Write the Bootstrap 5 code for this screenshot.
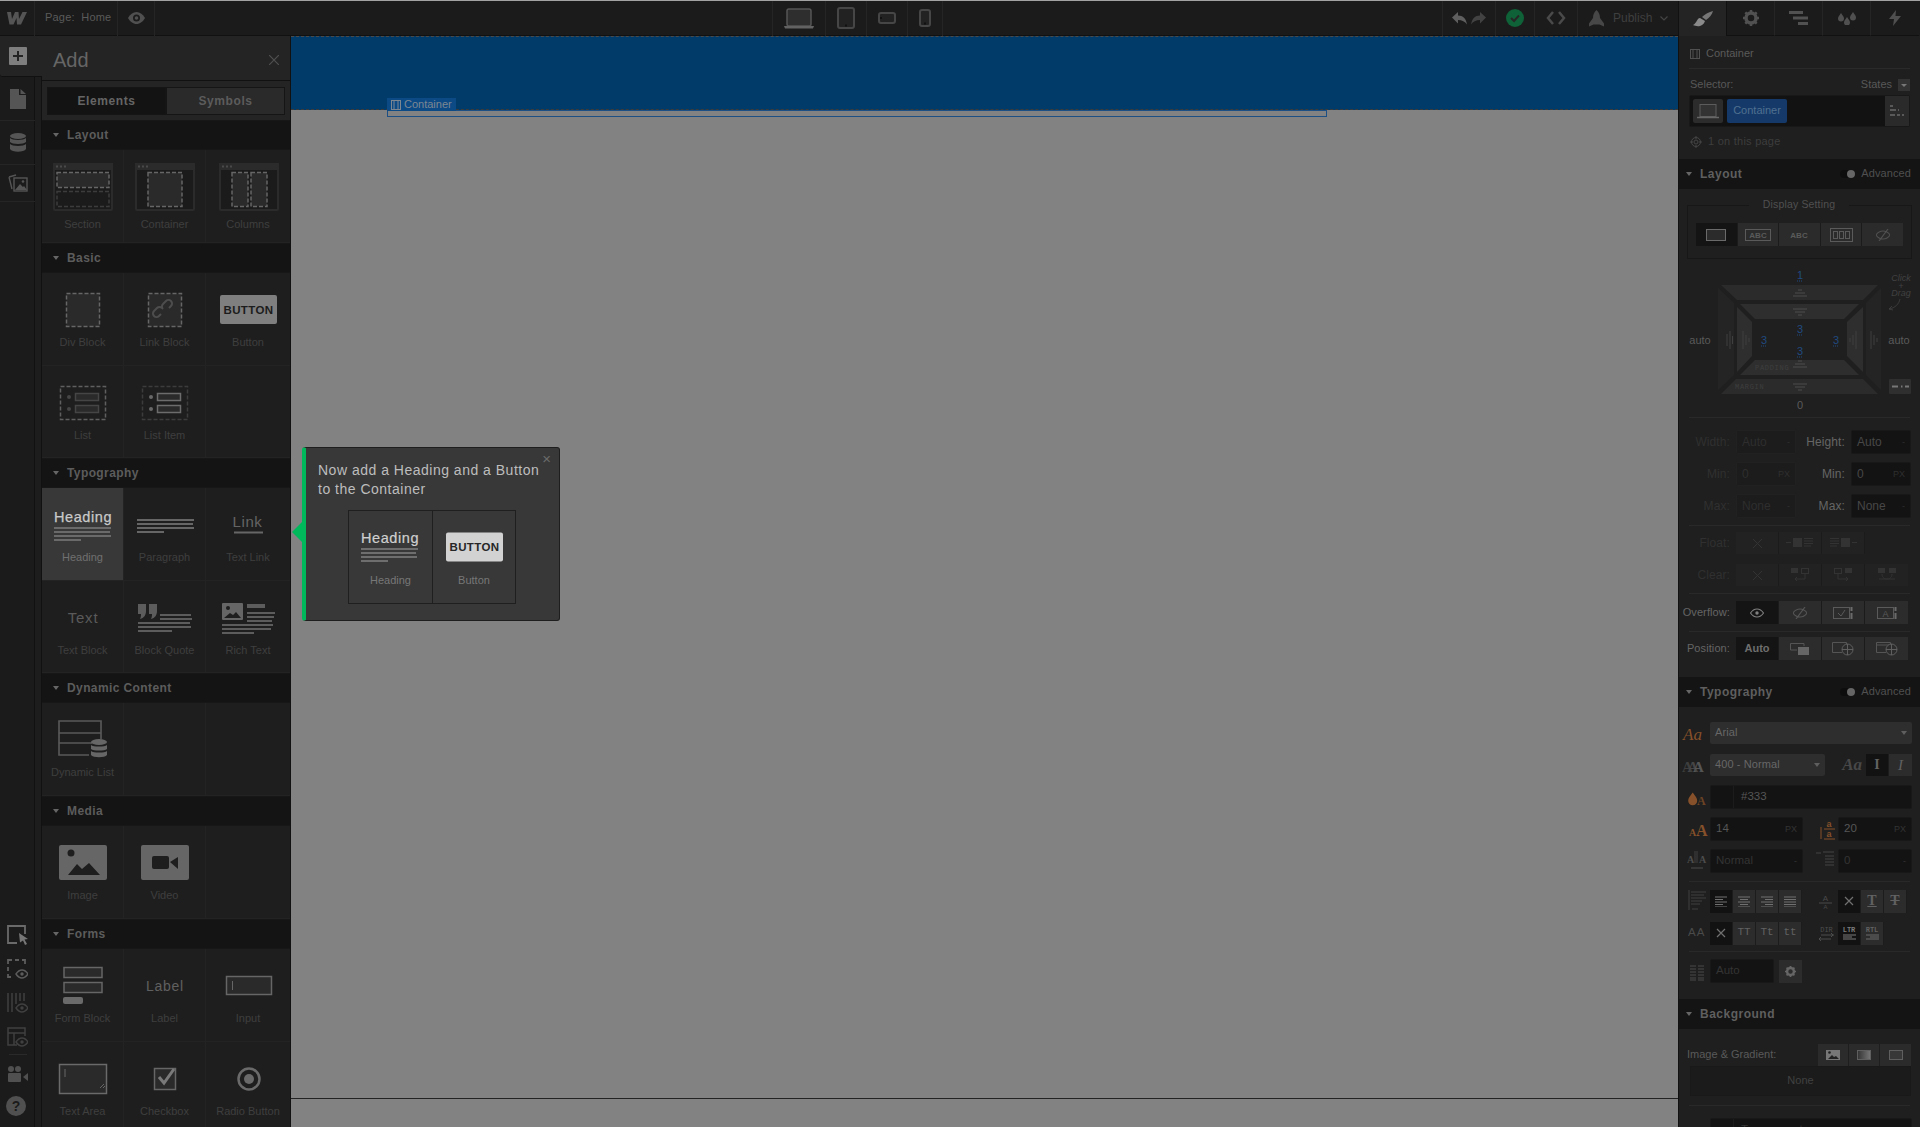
<!doctype html>
<html lang="en"><head><meta charset="utf-8"><title>Designer</title>
<link href="https://cdn.jsdelivr.net/npm/bootstrap@5.3.0/dist/css/bootstrap.min.css" rel="stylesheet">
<style>
html,body{height:100%;overflow:hidden;background:#1b1b1b}
body{font-family:"Liberation Sans",Arial,sans-serif;font-size:11px;color:#555;line-height:1.2}
svg{display:block;flex:none}
svg text{font-family:"Liberation Sans",Arial,sans-serif}
.app{height:1127px;border-top:1px solid #a3a3a3}
.addpanel>*,.rp>*{flex-shrink:0}
.topbar{height:35px;background:#1b1b1b;border-bottom:1px solid #111;flex:none}
.tcell{height:35px;border-right:1px solid #252525;flex:none}
.tc-logo{width:35px}.tc-page{width:83px;padding-left:10px;color:#5a5a5a;font-size:11px;letter-spacing:.2px}.tc-eye{width:37px}
.tsp{flex:0 0 617px}
.tc-first{width:54px;border-left:1px solid #252525}.tc-41{width:41px}.tc-35{width:35px}
.tc-undo{width:54px;border-left:1px solid #252525}.tc-39{width:39px}.tc-43{width:43px}.tc-pub{width:100px;border-right:0;gap:8px;padding-left:10px;font-size:12px;color:#3f3f3f}
.workspace{height:1091px}
.rail{width:35px;background:#1b1b1b;border-right:1px solid #111;flex:none}
.railstrip{width:7px;background:#1d1d1d;border-right:1px solid #111;flex:none}
.railtab{position:absolute;left:0;top:0;width:42px;height:41px;background:#242424;border-bottom:1px solid #111;border-bottom-left-radius:3px;z-index:2}
.railtab svg{margin-left:8px}
.railic{height:44px;width:35px;border-bottom:1px solid #252525}
.railbot{position:absolute;left:0;bottom:0;width:35px}
.rb-gap{margin-bottom:14px}
.addpanel{width:249px;background:#1e1e1e;border-right:1px solid #111;flex:none}
.addhead{height:45px;background:#242424;border-bottom:1px solid #111;padding:4px 11px 0;font-size:20px;color:#666}
.addtabs{height:39px;background:#242424;padding:6px 5px 5px;font-size:12px;font-weight:700;letter-spacing:.6px}
.addtab{flex:1 1 0;border:1px solid #151515}
.addtab-on{background:#131313;color:#656565;flex:0 0 119px}
.addtab-off{background:#2a2a2a;color:#5c5c5c}
.sechead{height:30px;background:#141414;border-top:1px solid #171717;border-bottom:1px solid #171717;padding-left:11px;font-size:12px;font-weight:700;color:#5c5c5c;letter-spacing:.4px;gap:8px}
.caret{width:0;height:0;border-left:3.5px solid transparent;border-right:3.5px solid transparent;border-top:4px solid #666;flex:none}
.tilerow{height:93px;border-bottom:1px solid #232323}
.tilerow+.tilerow{height:92px}
.tile{width:82px;height:92px;border-right:1px solid #232323;flex:none;color:#3f3f3f;text-align:center;line-height:16px;font-size:11px}
.tilerow+.tilerow .tile{height:91px}
.tile:last-child{width:84px;border-right:0}
.tile-on{background:#383838;color:#707070}
.canvasarea{background:#828282;min-width:0}
.sectionbox{height:74px;background:#003b6a;border-top:1px dashed #4a4a4a;border-bottom:1px dashed #3a3a3a}
.contbox{height:7px;margin:0 0 0 96px;width:940px;border:1px solid #1c4f83;background:#828282;position:relative}
.contlabel{position:absolute;left:-1px;top:-13px;width:69px;height:13px;background:#0c4a86;color:#7d8791;font-size:11px;padding-left:4px;gap:3px}
.pagefoot{position:absolute;left:0;right:0;top:1062px;height:40px;border-top:1px solid #222}
.tip{position:absolute;left:11px;top:411px;width:258px;height:174px;background:#383838;border:1px solid #1e1e1e;border-left:4px solid #00b85c;border-radius:3px;color:#bdbdbd;font-size:14px;line-height:19px;letter-spacing:.5px;padding:13px 10px 0 12px}
.tiparrow{position:absolute;left:-14px;top:74px;width:0;height:0;border:10px solid transparent;border-left:0;border-right-color:#00b85c}
.tipx{position:absolute;right:8px;top:3px;font-size:15px;color:#6a6a6a;line-height:16px;letter-spacing:0}
.tipgrid{width:168px;height:94px;margin:11px 0 0 30px;border:1px solid #1f1f1f}
.tiptile{width:83px;height:92px;font-size:11px;line-height:16px;letter-spacing:0;color:#777;text-align:center}
.tiptile+.tiptile{border-left:1px solid #1f1f1f}
.rp{width:242px;background:#1f1f1f;border-left:1px solid #111;flex:none;overflow:hidden;position:relative}
.rtabs{height:35px;background:#1b1b1b}
.rtab{width:48px;height:35px;border-right:1px solid #252525;border-bottom:1px solid #111;flex:none}
.rtab-on{background:#242424;border-bottom:0;border-right:1px solid #111}
.rtitle{height:33px;margin:0 10px;border-bottom:1px solid #2a2a2a;color:#5a5a5a;gap:6px;padding:4px 0 0 1px;font-size:11px}
.sellabel{height:26px;padding:6px 10px 0 11px;color:#585858}
.statesdd{width:12px;height:12px;background:#333;margin-left:6px}
.statesdd i{display:block;width:0;height:0;border:3px solid transparent;border-top:3px solid #777;margin:5px 0 0 3px}
.selbox{height:32px;margin:0 10px;background:#121212;border:1px solid #181818;border-radius:2px;padding-left:3px;gap:4px}
.selic{width:30px;height:24px;background:#2c2c2c;border-radius:2px}
.selpill{width:60px;height:24px;background:#153a6a;color:#50708f;border-radius:2px;font-size:11px}
.selend{width:24px;height:30px;background:#2a2a2a;margin-left:auto}
.onpage{height:32px;padding:0 0 3px 11px;gap:6px;color:#3d3d3d;letter-spacing:.25px}
.rhead{height:30px;background:#141414;padding:0 9px 0 7px;font-size:12px;font-weight:700;color:#5f5f5f;letter-spacing:.5px;gap:6px}
.adv{margin-left:auto;font-size:11px;font-weight:400;color:#505050;letter-spacing:.1px;gap:6px}
.togg{width:15px;height:8px;border-radius:4px;background:#0d0d0d;position:relative}
.togg i{position:absolute;right:0;top:0;width:8px;height:8px;border-radius:50%;background:#666}
.dsbox{position:relative;height:54px;margin:16px 8px 0 8px;border:1px solid #171717;padding:17px 8px 0 8px}
.dslabel{position:absolute;left:61px;top:-8px;width:100px;text-align:center;background:#1f1f1f;color:#505050;font-size:10.5px;letter-spacing:.15px}
.dsbtn{height:23px;flex:1 1 0;background:#2b2b2b;border-right:1px solid #1b1b1b}
.dsbtn-on{background:#141414}
.rsep{height:1px;background:#292929;margin:0 10px}
.frow{height:24px}
.frow-s{height:22px}.frow-m{height:23px}
.flabel{text-align:right;font-size:12px;color:#303030;flex:none;letter-spacing:.1px}
.fl-a{width:51px}.fl-b{width:49px}
.flabel.lit{color:#656565}
.finput{height:24px;background:#1c1c1c;border:1px solid #212121;border-radius:2px;padding:0 5px;color:#2e2e2e;font-size:12px;flex:none}
.finput.lit{background:#131313;border-color:#181818;color:#474747}
.finput small{margin-left:auto;font-size:9px;color:#2f2f2f}
.fi-60{width:60px;margin-left:6px}
.segs{height:100%;flex:none;margin-left:6px}
.seg{width:43px;height:100%;background:#222;border-right:1px solid #1b1b1b;color:#333}
.seg.lit{background:#2c2c2c}
.seg.sel{background:#141414;color:#6e6e6e;font-weight:700;font-size:11px}
.typrow{height:24px;position:relative;padding-left:31px}
.typrow-s{height:22px}
.typrow-s .tb{height:22px}
.typic{position:absolute;left:3px;top:0;width:27px;height:24px}
.tsel{height:22px;background:#2e2e2e;border-radius:2px;padding:0 5px;color:#676767;font-size:11px;flex:none;letter-spacing:.1px}
.ddcaret{margin-left:auto;width:0;height:0;border-left:3.5px solid transparent;border-right:3.5px solid transparent;border-top:4px solid #5f5f5f}
.tin{height:24px;background:#131313;border:1px solid #181818;border-radius:2px;padding:0 5px;color:#565656;font-size:11.5px;flex:none}
.tin.dim{color:#343434}
.tin small{margin-left:auto;font-size:9px;color:#333}
.w92{width:93px}.w74{width:74px}
.tseg{height:23px;flex:none}
.tb{height:23px;width:23px;background:#2c2c2c;border-right:1px solid #1c1c1c;color:#616161;font-size:11px;font-family:"Liberation Mono",monospace}
.tb.sel{background:#121212}
.bgtabs{height:22px;margin-left:auto;margin-right:9px}
.bgtab{width:31px;height:22px;background:#2b2b2b;border-right:1px solid #1e1e1e}
.nonebox{height:30px;margin:0 9px 0 11px;background:#1b1b1b;border:1px solid #191919;color:#414141;font-size:11px}
</style></head><body>
<div class="app d-flex overflow-hidden">
<div class="flex-grow-1 d-flex flex-column" style="min-width:0">
 <div class="topbar d-flex align-items-center">
  <div class="tcell tc-logo d-flex align-items-center justify-content-center">
   <svg width="20" height="14" viewBox="0 0 20 14"><path d="M0 1h4l1 7 3-7h3.500l.5 7 3.500-7H20l-6 12.500h-4L9.500 7l-3 6.500h-4z" fill="#545454"/></svg></div>
  <div class="tcell tc-page d-flex align-items-center">Page:&nbsp;&nbsp;Home</div>
  <div class="tcell tc-eye d-flex align-items-center justify-content-center">
   <svg width="17" height="12" viewBox="0 0 17 12"><path d="M0 6c2-3.500 5-6 8.500-6S15 2.500 17 6c-2 3.500-5 6-8.500 6S2 9.500 0 6z" fill="#505050"/><circle cx="8.500" cy="6" r="3.500" fill="#1b1b1b"/><circle cx="8.500" cy="6" r="1.800" fill="#505050"/></svg></div>
  <div class="tsp"></div>
  <div class="tcell tc-first d-flex align-items-center justify-content-center">
   <svg width="32" height="22" viewBox="0 0 32 22"><rect x="4" y="2" width="24" height="17" rx="2" fill="#2e2e2e" stroke="#555" stroke-width="1.500"/><path d="M1 19h30l-1 2.500H2z" fill="#626262"/></svg></div>
  <div class="tcell tc-41 d-flex align-items-center justify-content-center">
   <svg width="18" height="22" viewBox="0 0 18 22"><rect x="1" y="1" width="16" height="20" rx="2" fill="#222" stroke="#464646" stroke-width="2"/><rect x="8" y="17.500" width="2" height="2" fill="#111"/></svg></div>
  <div class="tcell tc-41 d-flex align-items-center justify-content-center">
   <svg width="18" height="12" viewBox="0 0 18 12"><rect x="1" y="1" width="16" height="10" rx="2" fill="#222" stroke="#464646" stroke-width="2"/><rect x="2" y="5" width="2" height="2" fill="#111"/></svg></div>
  <div class="tcell tc-35 d-flex align-items-center justify-content-center">
   <svg width="12" height="18" viewBox="0 0 12 18"><rect x="1" y="1" width="10" height="16" rx="2" fill="#222" stroke="#464646" stroke-width="2"/><rect x="5" y="13.500" width="2" height="2" fill="#111"/></svg></div>
  <div class="flex-grow-1"></div>
  <div class="tcell tc-undo d-flex align-items-center justify-content-center gap-1">
   <svg width="15" height="13" viewBox="0 0 15 13"><path d="M0 5.500 6 0v3.500c5 0 8 3 9 9-2-3-5-4.500-9-4.500v3.500z" fill="#5f5f5f"/></svg>
   <svg width="15" height="13" viewBox="0 0 15 13"><path d="M15 5.500 9 0v3.500c-5 0-8 3-9 9 2-3 5-4.500 9-4.500v3.500z" fill="#424242"/></svg></div>
  <div class="tcell tc-39 d-flex align-items-center justify-content-center">
   <svg width="18" height="18" viewBox="0 0 18 18"><circle cx="9" cy="9" r="9" fill="#0f6238"/><path d="M5 9l3 3 5-5.500" fill="none" stroke="#262626" stroke-width="2"/></svg></div>
  <div class="tcell tc-43 d-flex align-items-center justify-content-center">
   <svg width="20" height="14" viewBox="0 0 20 14"><path d="M7 1 2 7l5 6M13 1l5 6-5 6" fill="none" stroke="#4a4a4a" stroke-width="2.500"/></svg></div>
  <div class="tcell tc-pub d-flex align-items-center">
   <svg width="17" height="17" viewBox="0 0 17 17"><path d="M8.500 0c2.500 2 3.500 5 3.500 8l4 5.500v3l-4.500-2h-6L1 16.500v-3L5 8c0-3 1-6 3.500-8z" fill="#474747"/></svg>
   <span>Publish</span>
   <svg width="8" height="5" viewBox="0 0 8 5"><path d="M.5.500 4 4 7.500.500" fill="none" stroke="#444" stroke-width="1.200"/></svg></div>
 </div>
 <div class="workspace d-flex flex-grow-1">
  <div class="rail position-relative">
   <div class="railtab d-flex align-items-center"><svg width="20" height="20" viewBox="0 0 20 20"><rect x="1" width="18" height="18" y="1" rx="1" fill="#7e7e7e"/><path d="M10 5v10M5 10h10" stroke="#242424" stroke-width="2"/></svg></div>
   <div style="height:41px"></div>
   <div class="railic d-flex align-items-center justify-content-center"><svg width="16" height="20" viewBox="0 0 16 20"><path d="M0 0h9v6h7v14H0zM10.500 0 16 5h-5.500z" fill="#555"/></svg></div>
   <div class="railic d-flex align-items-center justify-content-center"><svg width="16" height="20" viewBox="0 0 16 20"><ellipse cx="8" cy="3" rx="8" ry="3" fill="#555"/><path d="M0 5c2 2.500 14 2.500 16 0v4c-2 2.500-14 2.500-16 0zM0 11c2 2.500 14 2.500 16 0v5c-2 3.500-14 3.500-16 0z" fill="#555"/></svg></div>
   <div class="railic d-flex align-items-center justify-content-center" style="height:37px"><svg width="20" height="18" viewBox="0 0 20 18"><path d="M1 3l7-2M1 3l3 12" stroke="#555" stroke-width="1.400" fill="none"/><rect x="6" y="4" width="13" height="13" fill="#1b1b1b" stroke="#555" stroke-width="1.400"/><path d="M7 16l5-6 3 3 1-1 3 4z" fill="#555"/><circle cx="15" cy="7.500" r="1.300" fill="#555"/></svg></div>
   <div class="railbot d-flex flex-column align-items-center">
    <svg class="rb-gap" width="21" height="20" viewBox="0 0 21 20"><path d="M18 9V1H1v17h9" fill="none" stroke="#6a6a6a" stroke-width="1.800"/><path d="M12 8l9 6-3.500.5L20 19l-2 1-2-4.500-3 2z" fill="#777"/></svg>
    <svg class="rb-gap" width="21" height="20" viewBox="0 0 21 20"><path d="M1 5V1h4M8 1h4M15 1h3v4M1 8v4M1 15v3h3" fill="none" stroke="#5c5c5c" stroke-width="1.800"/><path d="M9 15c2-3 4-4 6-4s4 1 6 4c-2 3-4 4-6 4s-4-1-6-4z" fill="none" stroke="#5c5c5c" stroke-width="1.400"/><circle cx="15" cy="15" r="1.700" fill="#5c5c5c"/></svg>
    <svg class="rb-gap" width="21" height="20" viewBox="0 0 21 20"><path d="M1 0v19M5 0v19M9 0v11M13 0v8M17 0v8" stroke="#404040" stroke-width="1.500"/><path d="M9 15c2-3 4-4 6-4s4 1 6 4c-2 3-4 4-6 4s-4-1-6-4z" fill="#1b1b1b" stroke="#404040" stroke-width="1.400"/><circle cx="15" cy="15" r="1.700" fill="#404040"/></svg>
    <svg width="21" height="20" viewBox="0 0 21 20"><path d="M10 18H1V1h17v8M1 6h17M7 6v12" fill="none" stroke="#404040" stroke-width="1.500"/><path d="M9 15c2-3 4-4 6-4s4 1 6 4c-2 3-4 4-6 4s-4-1-6-4z" fill="#1b1b1b" stroke="#404040" stroke-width="1.400"/><circle cx="15" cy="15" r="1.700" fill="#404040"/></svg>
    <div style="height:1px;width:18px;background:#2a2a2a;margin:7px 0 11px"></div>
    <svg class="rb-gap" width="21" height="16" viewBox="0 0 21 16"><circle cx="4" cy="3" r="3" fill="#505050"/><circle cx="11" cy="3" r="3" fill="#505050"/><rect x="1" y="7" width="13" height="9" rx="1" fill="#505050"/><path d="M16 11l5-4v8z" fill="#505050"/></svg>
    <svg width="20" height="20" viewBox="0 0 20 20" style="margin:0 3px 11px 0"><circle cx="10" cy="10" r="10" fill="#505050"/><text x="10" y="15" text-anchor="middle" font-size="14" font-weight="700" fill="#1b1b1b">?</text></svg>
   </div>
  </div>
  <div class="railstrip"></div>
  <div class="addpanel d-flex flex-column overflow-hidden">
   <div class="addhead d-flex align-items-center justify-content-between"><span>Add</span><svg width="10" height="10" viewBox="0 0 10 10"><path d="M0 0l10 10M10 0 0 10" stroke="#505050" stroke-width="1.200"/></svg></div>
   <div class="addtabs d-flex"><div class="addtab addtab-on d-flex align-items-center justify-content-center">Elements</div><div class="addtab addtab-off d-flex align-items-center justify-content-center">Symbols</div></div>

   <div class="sechead d-flex align-items-center"><i class="caret"></i>Layout</div>
   <div class="tilerow d-flex">
    <div class="tile"><svg width="82" height="66" viewBox="0 0 82 66"><rect x="12" y="14" width="58" height="46" rx="1" fill="#1b1b1b" stroke="#2b2b2b" stroke-width="2"/><rect x="11" y="13" width="60" height="7" fill="#2b2b2b"/><path d="M14 16.500h10" stroke="#4a4a4a" stroke-width="2" stroke-dasharray="2 2"/><rect x="15" y="22.500" width="52" height="15" fill="#2a2a2a" stroke="#666" stroke-width="1.500" stroke-dasharray="4 2"/><rect x="15" y="41.500" width="52" height="15" fill="none" stroke="#3c3c3c" stroke-width="1.500" stroke-dasharray="4 2"/></svg>Section</div>
    <div class="tile"><svg width="82" height="66" viewBox="0 0 82 66"><rect x="12" y="14" width="58" height="46" rx="1" fill="#1b1b1b" stroke="#2b2b2b" stroke-width="2"/><rect x="11" y="13" width="60" height="7" fill="#2b2b2b"/><path d="M14 16.500h10" stroke="#4a4a4a" stroke-width="2" stroke-dasharray="2 2"/><rect x="24" y="22.500" width="34" height="34" fill="#2a2a2a" stroke="#666" stroke-width="1.500" stroke-dasharray="4 2"/></svg>Container</div>
    <div class="tile"><svg width="84" height="66" viewBox="0 0 84 66"><rect x="14" y="14" width="58" height="46" rx="1" fill="#1b1b1b" stroke="#2b2b2b" stroke-width="2"/><rect x="13" y="13" width="60" height="7" fill="#2b2b2b"/><path d="M16 16.500h10" stroke="#4a4a4a" stroke-width="2" stroke-dasharray="2 2"/><rect x="26" y="22.500" width="16" height="34" fill="#2a2a2a" stroke="#666" stroke-width="1.500" stroke-dasharray="4 2"/><rect x="45" y="22.500" width="16" height="34" fill="#2a2a2a" stroke="#666" stroke-width="1.500" stroke-dasharray="4 2"/></svg>Columns</div>
   </div>

   <div class="sechead d-flex align-items-center"><i class="caret"></i>Basic</div>
   <div class="tilerow d-flex">
    <div class="tile"><svg width="82" height="61" viewBox="0 0 82 61"><rect x="24.500" y="20.500" width="33" height="33" fill="#2a2a2a" stroke="#666" stroke-width="1.500" stroke-dasharray="4 2"/></svg>Div Block</div>
    <div class="tile"><svg width="82" height="61" viewBox="0 0 82 61"><rect x="24.500" y="20.500" width="33" height="33" fill="#2a2a2a" stroke="#666" stroke-width="1.500" stroke-dasharray="4 2"/><path d="M37 40l-2 2a3.500 3.500 0 0 1-5-5l3-3a3.500 3.500 0 0 1 5 0M45 34l2-2a3.500 3.500 0 0 0-5-5l-3 3a3.500 3.500 0 0 0 0 5" transform="translate(0 1)" fill="none" stroke="#4d4d4d" stroke-width="2"/></svg>Link Block</div>
    <div class="tile"><svg width="84" height="61" viewBox="0 0 84 61"><rect x="14" y="22" width="57" height="29" rx="2" fill="#7f7f7f"/><text x="42.500" y="41" text-anchor="middle" font-size="11.500" font-weight="700" letter-spacing=".4" fill="#1c1c1c">BUTTON</text></svg>Button</div>
   </div>
   <div class="tilerow d-flex">
    <div class="tile"><svg width="82" height="61" viewBox="0 0 82 61"><rect x="18.500" y="20.500" width="45" height="33" fill="none" stroke="#5f5f5f" stroke-width="1.500" stroke-dasharray="4 2"/><circle cx="27" cy="31" r="2" fill="#454545"/><circle cx="27" cy="43" r="2" fill="#454545"/><rect x="33.500" y="27.500" width="23" height="7" fill="#2a2a2a" stroke="#454545" stroke-width="1.500"/><rect x="33.500" y="39.500" width="23" height="7" fill="#2a2a2a" stroke="#454545" stroke-width="1.500"/></svg>List</div>
    <div class="tile"><svg width="82" height="61" viewBox="0 0 82 61"><rect x="18.500" y="20.500" width="45" height="33" fill="none" stroke="#3c3c3c" stroke-width="1.500" stroke-dasharray="4 2"/><circle cx="27" cy="31" r="2" fill="#686868"/><circle cx="27" cy="43" r="2" fill="#686868"/><rect x="33.500" y="27.500" width="23" height="7" fill="#2a2a2a" stroke="#6c6c6c" stroke-width="1.500"/><rect x="33.500" y="39.500" width="23" height="7" fill="#2a2a2a" stroke="#6c6c6c" stroke-width="1.500"/></svg>List Item</div>
    <div class="tile"></div>
   </div>

   <div class="sechead d-flex align-items-center"><i class="caret"></i>Typography</div>
   <div class="tilerow d-flex">
    <div class="tile tile-on"><svg width="81" height="61" viewBox="0 0 81 61"><text x="41" y="34" text-anchor="middle" font-size="14.500" letter-spacing=".6" fill="#c9c9c9" stroke="#c9c9c9" stroke-width=".25">Heading</text><path d="M12 40h57M12 44h56M12 48h57M12 52h27" stroke="#6a6a6a" stroke-width="2"/></svg>Heading</div>
    <div class="tile"><svg width="82" height="61" viewBox="0 0 82 61"><path d="M13 32h57M13 36h56M13 40h57M13 44h27" stroke="#666" stroke-width="2"/></svg>Paragraph</div>
    <div class="tile"><svg width="84" height="61" viewBox="0 0 84 61"><text x="41.500" y="39" text-anchor="middle" font-size="15" letter-spacing=".6" fill="#646464">Link</text><path d="M28 44.500h29" stroke="#666" stroke-width="2"/></svg>Text Link</div>
   </div>
   <div class="tilerow d-flex">
    <div class="tile"><svg width="82" height="61" viewBox="0 0 82 61"><text x="41" y="42" text-anchor="middle" font-size="15" letter-spacing=".8" fill="#5a5a5a">Text</text></svg>Text Block</div>
    <div class="tile"><svg width="82" height="61" viewBox="0 0 82 61"><path d="M14 23h8v7c0 4-2 7-6 8 1-2 1-4 1-5h-3zM25 23h8v7c0 4-2 7-6 8 1-2 1-4 1-5h-3z" fill="#5c5c5c"/><path d="M36 34h31M36 38h32M14 42h52M14 46h53M14 50h34" stroke="#5c5c5c" stroke-width="2"/></svg>Block Quote</div>
    <div class="tile"><svg width="84" height="61" viewBox="0 0 84 61"><rect x="16" y="22" width="21" height="17" rx="1" fill="#666"/><circle cx="22" cy="27" r="2" fill="#1e1e1e"/><path d="M18 37l6-5 3 2 3-3 5 6z" fill="#1e1e1e"/><path d="M41 25h18" stroke="#5c5c5c" stroke-width="4"/><path d="M41 32h28M41 36h27M41 40h25M16 44h51M16 48h49M16 52h32" stroke="#5c5c5c" stroke-width="2"/></svg>Rich Text</div>
   </div>

   <div class="sechead d-flex align-items-center"><i class="caret"></i>Dynamic Content</div>
   <div class="tilerow d-flex">
    <div class="tile"><svg width="82" height="61" viewBox="0 0 82 61"><path d="M47 52H17V18h42v18M17 30h42M17 40h33" fill="none" stroke="#5a5a5a" stroke-width="1.600"/><ellipse cx="57" cy="39" rx="8" ry="3" fill="#666"/><path d="M49 42c2 2 14 2 16 0v4c-2 2-14 2-16 0zM49 48c2 2 14 2 16 0v4c-2 3-14 3-16 0z" fill="#666"/></svg>Dynamic List</div>
    <div class="tile"></div><div class="tile"></div>
   </div>

   <div class="sechead d-flex align-items-center"><i class="caret"></i>Media</div>
   <div class="tilerow d-flex">
    <div class="tile"><svg width="82" height="61" viewBox="0 0 82 61"><rect x="17" y="19" width="48" height="35" rx="2" fill="#666"/><circle cx="29" cy="27" r="3.500" fill="#1e1e1e"/><path d="M26 49l9-11 5 5 7-6 11 12z" fill="#1e1e1e"/></svg>Image</div>
    <div class="tile"><svg width="82" height="61" viewBox="0 0 82 61"><rect x="17" y="19" width="48" height="35" rx="2" fill="#666"/><rect x="28" y="30" width="17" height="13" rx="2" fill="#1e1e1e"/><path d="M46 36l8-5v12z" fill="#1e1e1e"/></svg>Video</div>
    <div class="tile"></div>
   </div>

   <div class="sechead d-flex align-items-center"><i class="caret"></i>Forms</div>
   <div class="tilerow d-flex">
    <div class="tile"><svg width="82" height="61" viewBox="0 0 82 61"><rect x="22" y="18.500" width="38" height="10" fill="#2a2a2a" stroke="#666" stroke-width="1.500"/><rect x="22" y="33.500" width="38" height="10" fill="#2a2a2a" stroke="#666" stroke-width="1.500"/><rect x="21" y="48" width="20" height="7" rx="2" fill="#6a6a6a"/></svg>Form Block</div>
    <div class="tile"><svg width="82" height="61" viewBox="0 0 82 61"><text x="41" y="42" text-anchor="middle" font-size="14" letter-spacing=".7" fill="#606060">Label</text></svg>Label</div>
    <div class="tile"><svg width="84" height="61" viewBox="0 0 84 61"><rect x="20.500" y="27.500" width="45" height="18" fill="#2a2a2a" stroke="#666" stroke-width="1.500"/><path d="M26.500 32v9" stroke="#666" stroke-width="1"/></svg>Input</div>
   </div>
   <div class="tilerow d-flex">
    <div class="tile"><svg width="82" height="61" viewBox="0 0 82 61"><rect x="17.500" y="22.500" width="47" height="29" fill="#2a2a2a" stroke="#6a6a6a" stroke-width="1.500"/><path d="M23 27v8M58 46l4-4M61 46l2-2" stroke="#666" stroke-width="1"/></svg>Text Area</div>
    <div class="tile"><svg width="82" height="61" viewBox="0 0 82 61"><rect x="30.500" y="26.500" width="21" height="21" fill="#2a2a2a" stroke="#666" stroke-width="1.500"/><path d="M35 35l5 6 10-14" fill="none" stroke="#7a7a7a" stroke-width="3"/></svg>Checkbox</div>
    <div class="tile"><svg width="84" height="61" viewBox="0 0 84 61"><circle cx="43" cy="37" r="10.500" fill="none" stroke="#6a6a6a" stroke-width="2.500"/><circle cx="43" cy="37" r="5" fill="#6a6a6a"/></svg>Radio Button</div>
   </div>
  </div>

  <div class="canvasarea flex-grow-1 position-relative overflow-hidden">
   <div class="sectionbox"></div>
   <div class="contbox"><div class="contlabel d-flex align-items-center"><svg width="10" height="10" viewBox="0 0 10 10"><rect x=".5" y=".5" width="9" height="9" fill="none" stroke="#7d8791"/><path d="M3 0v10M7 0v10" stroke="#7d8791"/></svg>Container</div></div>
   <div class="pagefoot"></div>
   <div class="tip">
    <i class="tiparrow"></i><span class="tipx">×</span>
    Now add a Heading and a Button to the Container
    <div class="tipgrid d-flex">
     <div class="tiptile"><svg width="83" height="61" viewBox="0 0 83 61"><text x="41" y="32" text-anchor="middle" font-size="14.500" letter-spacing=".6" fill="#cfcfcf" stroke="#cfcfcf" stroke-width=".2">Heading</text><path d="M12 38h57M12 42h55M12 46h56M12 50h27" stroke="#6e6e6e" stroke-width="2"/></svg>Heading</div>
     <div class="tiptile"><svg width="83" height="61" viewBox="0 0 83 61"><rect x="13" y="21.500" width="57" height="29" rx="2" fill="#d2d2d2"/><text x="41.500" y="40" text-anchor="middle" font-size="11.500" font-weight="700" letter-spacing=".4" fill="#262626">BUTTON</text></svg>Button</div>
    </div>
   </div>
  </div>
 </div>
</div>

<aside class="rp d-flex flex-column">
 <div class="rtabs d-flex">
  <div class="rtab rtab-on d-flex align-items-center justify-content-center"><svg width="20" height="16" viewBox="0 0 20 16"><path d="M20 0c-4 1-8 3-11 6l4 3c3-2 6-5 7-9z" fill="#767676"/><path d="M7 7c-3 0-3 5-7 7 4 2 10 2 12-4z" fill="#8a8a8a"/></svg></div>
  <div class="rtab d-flex align-items-center justify-content-center"><svg width="16" height="16" viewBox="0 0 16 16"><circle cx="8" cy="8" r="5" fill="none" stroke="#515151" stroke-width="3.500"/><path d="M8 0v3M8 13v3M0 8h3M13 8h3M2.300 2.300l2.100 2.100M11.600 11.600l2.100 2.100M13.700 2.300l-2.100 2.100M4.400 11.600l-2.100 2.100" stroke="#515151" stroke-width="2.500"/></svg></div>
  <div class="rtab d-flex align-items-center justify-content-center"><svg width="19" height="14" viewBox="0 0 19 14"><path d="M0 1.500h14M4 7h15M9 12.500h10" stroke="#515151" stroke-width="2.800"/></svg></div>
  <div class="rtab d-flex align-items-center justify-content-center"><svg width="18" height="14" viewBox="0 0 18 14"><path d="M3 2c2 3 3 4 3 5.500a3 3 0 0 1-6 0C0 6 1 5 3 2zM9 6c2 3 3 4 3 5.500a3 3 0 0 1-6 0C6 10 7 9 9 6zM15 1c2 3 3 4 3 5.500a3 3 0 0 1-6 0C12 5 13 4 15 1z" fill="#505050"/></svg></div>
  <div class="rtab d-flex align-items-center justify-content-center" style="border-right:0"><svg width="12" height="16" viewBox="0 0 12 16"><path d="M7 0 0 9h5l-1 7 8-10H6.500z" fill="#4f4f4f"/></svg></div>
 </div>
 <div class="rtitle d-flex align-items-center"><svg width="10" height="10" viewBox="0 0 10 10"><rect x=".5" y=".5" width="9" height="9" fill="none" stroke="#505050"/><path d="M3 0v10M7 0v10" stroke="#505050"/></svg>Container</div>
 <div class="sellabel d-flex align-items-center"><span>Selector:</span><span class="ms-auto">States</span><span class="statesdd"><i></i></span></div>
 <div class="selbox d-flex align-items-center"><div class="selic d-flex align-items-center justify-content-center"><svg width="22" height="15" viewBox="0 0 22 15"><rect x="3" y=".5" width="16" height="12" fill="#333" stroke="#5c5c5c"/><path d="M0 13.500h22" stroke="#666" stroke-width="1.500"/></svg></div><div class="selpill d-flex align-items-center justify-content-center">Container</div><div class="selend d-flex align-items-center justify-content-center"><svg width="14" height="12" viewBox="0 0 14 12"><path d="M0 1h3M0 5h6M8 5h1M0 10h5M7 10h3M12 10h2" stroke="#6a6a6a" stroke-width="1.500"/></svg></div></div>
 <div class="onpage d-flex align-items-center"><svg width="12" height="12" viewBox="0 0 12 12"><circle cx="6" cy="6" r="4.500" fill="none" stroke="#454545"/><circle cx="6" cy="6" r="2" fill="none" stroke="#454545"/><path d="M6 0v3M6 9v3M0 6h3M9 6h3" stroke="#454545"/></svg>1 on this page</div>

 <div class="rhead d-flex align-items-center"><i class="caret"></i><span style="margin-left:2px">Layout</span><span class="adv d-flex align-items-center"><span class="togg"><i></i></span>Advanced</span></div>
 <div class="dsbox"><span class="dslabel">Display Setting</span>
  <div class="d-flex">
   <div class="dsbtn dsbtn-on d-flex align-items-center justify-content-center"><svg width="20" height="12" viewBox="0 0 20 12"><rect x=".5" y=".5" width="19" height="11" fill="#2b2b2b" stroke="#6a6a6a"/></svg></div>
   <div class="dsbtn d-flex align-items-center justify-content-center"><svg width="26" height="12" viewBox="0 0 26 12"><rect x=".5" y=".5" width="25" height="11" fill="none" stroke="#5a5a5a"/><text x="13" y="9" text-anchor="middle" font-size="8" font-weight="700" fill="#5a5a5a">ABC</text></svg></div>
   <div class="dsbtn d-flex align-items-center justify-content-center"><svg width="26" height="12" viewBox="0 0 26 12"><text x="13" y="9" text-anchor="middle" font-size="8" font-weight="700" fill="#5a5a5a">ABC</text></svg></div>
   <div class="dsbtn d-flex align-items-center justify-content-center"><svg width="23" height="14" viewBox="0 0 23 14"><rect x=".5" y=".5" width="22" height="13" fill="none" stroke="#5a5a5a"/><rect x="3.500" y="3.500" width="4" height="7" fill="none" stroke="#5a5a5a"/><rect x="9.500" y="3.500" width="4" height="7" fill="none" stroke="#5a5a5a"/><rect x="15.500" y="3.500" width="4" height="7" fill="none" stroke="#5a5a5a"/></svg></div>
   <div class="dsbtn d-flex align-items-center justify-content-center" style="border-right:0"><svg width="14" height="12" viewBox="0 0 14 12"><path d="M0 6c2-3 4-4 7-4s5 1 7 4c-2 3-4 4-7 4s-5-1-7-4zM3 12 12 0" fill="none" stroke="#505050" stroke-width="1.200"/></svg></div>
  </div>
 </div>

 <svg style="margin-top:3px" width="241" height="150" viewBox="1679 262 241 150">
  <g fill="#2b2b2b">
   <path d="M1721 285h157l-15 15h-126z"/><path d="M1736 379h127l15 15h-157z"/>
   <path d="M1718 288l16 15v72l-16 15z" fill="#242424"/><path d="M1881 288l-15 15v72l15 15z" fill="#242424"/>
   <path d="M1740 304h119l-15 15h-89z" fill="#2e2e2e"/><path d="M1755 360h89l15 15h-119z" fill="#2e2e2e"/>
   <path d="M1737 307l15 15v34l-15 16z" fill="#2e2e2e"/><path d="M1863 307l-16 15v34l16 16z" fill="#2e2e2e"/>
  </g>
  <path d="M1793 296h14M1795 293h10M1798 290h4M1793 309h14M1795 312h10M1798 315h4M1793 367h14M1795 364h10M1798 361h4M1793 384h14M1795 387h10M1798 390h4" stroke="#4c4c4c"/>
  <path d="M1727 334v12M1730 331v18M1732.500 336v8M1743 331v18M1746 335v10M1749 338v4M1856 331v18M1853 335v10M1850 338v4M1871 331v18M1874 335v10M1877 338v4" stroke="#3f3f3f"/>
  <g font-size="11" text-anchor="middle" fill="#1f4a80">
   <text x="1800" y="333">3</text><text x="1800" y="355">3</text><text x="1764" y="344">3</text><text x="1836" y="344">3</text><text x="1800" y="279">1</text>
  </g>
  <path d="M1797 281h6M1797 335h6M1797 357h6M1761 346h6M1833 346h6" stroke="#1f4a80" stroke-dasharray="1 1"/>
  <g font-size="11" text-anchor="middle" fill="#5a5a5a"><text x="1700" y="344">auto</text><text x="1899" y="344">auto</text><text x="1800" y="409">0</text></g>
  <text x="1755" y="370" font-size="7" letter-spacing=".7" fill="#3e3e3e" style="font-family:'Liberation Mono',monospace">PADDING</text>
  <text x="1735" y="389" font-size="7" letter-spacing=".7" fill="#3e3e3e" style="font-family:'Liberation Mono',monospace">MARGIN</text>
  <g font-size="9" font-style="italic" text-anchor="middle" fill="#414141"><text x="1901" y="281">Click</text><text x="1901" y="289">+</text><text x="1901" y="296">Drag</text></g>
  <path d="M1900 299c-1 5-5 9-11 10m0 0 3-3m-3 3 4 1" fill="none" stroke="#414141" stroke-width=".8"/>
  <rect x="1889" y="379" width="22" height="15" rx="1" fill="#2f2f2f"/><path d="M1892 386.500h6M1901 386.500h1.500M1905 386.500h4" stroke="#777" stroke-width="2"/>
 </svg>
 <div class="rsep" style="margin-top:5px"></div>

 <div class="frow d-flex align-items-center" style="margin-top:12px"><span class="flabel fl-a">Width:</span><div class="finput fi-60 d-flex align-items-center">Auto<small>-</small></div><span class="flabel lit fl-b">Height:</span><div class="finput lit fi-60 d-flex align-items-center">Auto<small>-</small></div></div>
 <div class="frow d-flex align-items-center" style="margin-top:8px"><span class="flabel fl-a">Min:</span><div class="finput fi-60 d-flex align-items-center">0<small>PX</small></div><span class="flabel lit fl-b">Min:</span><div class="finput lit fi-60 d-flex align-items-center">0<small>PX</small></div></div>
 <div class="frow d-flex align-items-center" style="margin-top:8px"><span class="flabel fl-a">Max:</span><div class="finput fi-60 d-flex align-items-center">None<small>-</small></div><span class="flabel lit fl-b">Max:</span><div class="finput lit fi-60 d-flex align-items-center">None<small>-</small></div></div>
 <div class="rsep" style="margin-top:7px"></div>
 <div class="frow frow-s d-flex align-items-center" style="margin-top:6px"><span class="flabel fl-a">Float:</span><div class="segs d-flex">
   <div class="seg d-flex align-items-center justify-content-center"><svg width="9" height="9" viewBox="0 0 9 9"><path d="M0 0l9 9M9 0 0 9" stroke="#333"/></svg></div>
   <div class="seg d-flex align-items-center justify-content-center"><svg width="28" height="10" viewBox="0 0 28 10"><rect x="7" width="9" height="9" fill="#333"/><path d="M0 4.500h5M18 .5h9M18 3h9M18 5.500h9M18 8h7" stroke="#333"/></svg></div>
   <div class="seg d-flex align-items-center justify-content-center"><svg width="28" height="10" viewBox="0 0 28 10"><rect x="12" width="9" height="9" fill="#333"/><path d="M23 4.500h5M1 .5h9M1 3h9M1 5.500h9M1 8h7" stroke="#333"/></svg></div></div></div>
 <div class="frow frow-s d-flex align-items-center" style="margin-top:10px"><span class="flabel fl-a">Clear:</span><div class="segs d-flex">
   <div class="seg d-flex align-items-center justify-content-center"><svg width="9" height="9" viewBox="0 0 9 9"><path d="M0 0l9 9M9 0 0 9" stroke="#333"/></svg></div>
   <div class="seg d-flex align-items-center justify-content-center"><svg width="18" height="14" viewBox="0 0 18 14"><rect y="0" width="7" height="5" fill="#333"/><rect x="10.500" y=".5" width="7" height="5" fill="none" stroke="#333"/><path d="M14 6v5H4m2-2-2 2 2 2" fill="none" stroke="#333"/></svg></div>
   <div class="seg d-flex align-items-center justify-content-center"><svg width="18" height="14" viewBox="0 0 18 14"><rect x=".5" y=".5" width="7" height="5" fill="none" stroke="#333"/><rect x="11" y="0" width="7" height="5" fill="#333"/><path d="M4 6v5h10m-2-2 2 2-2 2" fill="none" stroke="#333"/></svg></div>
   <div class="seg d-flex align-items-center justify-content-center" style="border-right:0"><svg width="18" height="14" viewBox="0 0 18 14"><rect width="7" height="5" fill="#333"/><rect x="11" width="7" height="5" fill="#333"/><path d="M4 6c0 4 3 5 5 5s5-1 5-5M1 11h16" fill="none" stroke="#333"/></svg></div></div></div>
 <div class="rsep" style="margin-top:7px"></div>
 <div class="frow frow-m d-flex align-items-center" style="margin-top:7px"><span class="flabel lit fl-a" style="font-size:11px">Overflow:</span><div class="segs d-flex">
   <div class="seg sel d-flex align-items-center justify-content-center"><svg width="14" height="10" viewBox="0 0 14 10"><path d="M.5 5C2.500 2 4.500 1 7 1s4.500 1 6.500 4c-2 3-4 4-6.500 4S2.500 8 .5 5z" fill="none" stroke="#808080" stroke-width="1.200"/><circle cx="7" cy="5" r="1.700" fill="#808080"/></svg></div>
   <div class="seg lit d-flex align-items-center justify-content-center"><svg width="14" height="12" viewBox="0 0 14 12"><path d="M0 6c2-3 4-4 7-4s5 1 7 4c-2 3-4 4-7 4s-5-1-7-4zM3 12 12 0" fill="none" stroke="#555" stroke-width="1.200"/></svg></div>
   <div class="seg lit d-flex align-items-center justify-content-center"><svg width="20" height="12" viewBox="0 0 20 12"><rect x=".5" y=".5" width="16" height="11" fill="none" stroke="#5a5a5a"/><path d="M5 6l3 3 4-6" fill="none" stroke="#5a5a5a"/><rect x="17.500" width="2" height="4" fill="#6a6a6a"/><rect x="17.500" y="6" width="2" height="6" fill="#6a6a6a"/></svg></div>
   <div class="seg lit d-flex align-items-center justify-content-center" style="border-right:0"><svg width="20" height="12" viewBox="0 0 20 12"><rect x=".5" y=".5" width="16" height="11" fill="none" stroke="#5a5a5a"/><text x="8.500" y="9.500" text-anchor="middle" font-size="9" fill="#5a5a5a">A</text><rect x="17.500" width="2" height="4" fill="#6a6a6a"/><rect x="17.500" y="6" width="2" height="6" fill="#6a6a6a"/></svg></div></div></div>
 <div class="rsep" style="margin-top:7px"></div>
 <div class="frow frow-m d-flex align-items-center" style="margin-top:5px"><span class="flabel lit fl-a" style="font-size:11px">Position:</span><div class="segs d-flex">
   <div class="seg sel d-flex align-items-center justify-content-center">Auto</div>
   <div class="seg lit d-flex align-items-center justify-content-center"><svg width="20" height="12" viewBox="0 0 20 12"><path d="M7 7H.5V.5H14V3" fill="none" stroke="#555"/><rect x="8" y="4" width="11" height="8" fill="#666"/></svg></div>
   <div class="seg lit d-flex align-items-center justify-content-center"><svg width="22" height="14" viewBox="0 0 22 14"><path d="M10 10.500H.5v-10h14V3" fill="none" stroke="#555"/><circle cx="15.500" cy="7.500" r="5.500" fill="#2c2c2c" stroke="#5f5f5f"/><path d="M15.500 2v11M10 7.500h11" stroke="#5f5f5f"/></svg></div>
   <div class="seg lit d-flex align-items-center justify-content-center" style="border-right:0"><svg width="22" height="14" viewBox="0 0 22 14"><path d="M10 10.500H.5v-10h14V3M.5 3h14" fill="none" stroke="#555"/><circle cx="15.500" cy="7.500" r="5.500" fill="#2c2c2c" stroke="#5f5f5f"/><path d="M15.500 2v11M10 7.500h11" stroke="#5f5f5f"/></svg></div></div></div>

 <div class="rhead d-flex align-items-center" style="margin-top:17px"><i class="caret"></i><span style="margin-left:2px">Typography</span><span class="adv d-flex align-items-center"><span class="togg"><i></i></span>Advanced</span></div>

 <div class="typrow typrow-s d-flex align-items-center" style="margin-top:15px"><svg class="typic" viewBox="0 0 27 24"><text x="1" y="18" font-size="17" font-style="italic" fill="#86512a" style="font-family:'Liberation Serif',serif">Aa</text></svg><div class="tsel d-flex align-items-center" style="width:202px">Arial<i class="ddcaret"></i></div></div>
 <div class="typrow typrow-s d-flex align-items-center" style="margin-top:10px"><svg class="typic" viewBox="0 0 27 24"><text x="0" y="18" font-size="15" font-weight="700" fill="#3d3d3d" style="font-family:'Liberation Serif',serif">A</text><text x="5.500" y="18" font-size="15" font-weight="700" fill="#454545" style="font-family:'Liberation Serif',serif">A</text><text x="11" y="18" font-size="15" font-weight="700" fill="#555" style="font-family:'Liberation Serif',serif">A</text></svg><div class="tsel d-flex align-items-center" style="width:115px">400 - Normal<i class="ddcaret"></i></div>
   <span class="ms-auto" style="font:italic 700 17px 'Liberation Serif',serif;color:#484848;margin-right:4px">Aa</span><div class="tb sel d-flex align-items-center justify-content-center" style="font:700 14px 'Liberation Serif',serif">I</div><div class="tb d-flex align-items-center justify-content-center" style="font:italic 400 15px 'Liberation Serif',serif;margin-right:8px;border-right:0">I</div></div>
 <div class="typrow d-flex align-items-center" style="margin-top:9px"><svg class="typic" viewBox="0 0 27 24"><path d="M13 4c3 4 5 6 5 9a5 5 0 0 1-10 0c0-3 2-5 5-9z" fill="#86512a" transform="translate(-1 4) scale(.9)"/><text x="15" y="20" font-size="12" font-weight="700" fill="#6c4425" style="font-family:'Liberation Serif',serif">A</text></svg><div class="tin d-flex align-items-center p-0" style="width:202px"><span style="width:23px;height:22px;border-right:1px solid #1c1c1c"></span><span style="margin-left:7px">#333</span></div></div>
 <div class="typrow d-flex align-items-center" style="margin-top:8px"><svg class="typic" viewBox="0 0 27 24"><text x="7" y="19" font-size="10" font-weight="700" fill="#86512a" style="font-family:'Liberation Serif',serif">A</text><text x="14" y="19" font-size="16" font-weight="700" fill="#86512a" style="font-family:'Liberation Serif',serif">A</text></svg><div class="tin w92 d-flex align-items-center">14<small>PX</small></div>
   <div class="position-relative d-flex" style="margin-left:35px"><svg class="position-absolute" style="left:-18px;top:1px" width="16" height="22" viewBox="0 0 16 22"><text x="9" y="9" text-anchor="middle" font-size="9" font-weight="700" fill="#86512a">a</text><path d="M4 11h11" stroke="#86512a"/><text x="9" y="19" text-anchor="middle" font-size="9" font-weight="700" fill="#86512a">a</text><path d="M4 21h11M1 9v12" stroke="#86512a"/></svg><div class="tin w74 d-flex align-items-center">20<small>PX</small></div></div></div>
 <div class="typrow d-flex align-items-center" style="margin-top:8px"><svg class="typic" viewBox="0 0 27 24"><text x="5" y="14" font-size="10" font-weight="700" fill="#4d4d4d" style="font-family:'Liberation Serif',serif">A</text><text x="17" y="14" font-size="10" font-weight="700" fill="#4d4d4d" style="font-family:'Liberation Serif',serif">A</text><path d="M13 2v12M15 2v12" stroke="#404040"/><path d="M9 19h12" stroke="#4d4d4d"/></svg><div class="tin dim w92 d-flex align-items-center">Normal<small>-</small></div>
   <div class="position-relative d-flex" style="margin-left:35px"><svg class="position-absolute" style="left:-22px;top:2px" width="18" height="16" viewBox="0 0 18 16"><path d="M7 1h11M9 5h9M9 8h9M9 11h9M9 14h9M0 2h5" stroke="#454545"/></svg><div class="tin dim w74 d-flex align-items-center">0<small>-</small></div></div></div>
 <div class="rsep" style="margin-top:8px"></div>
 <div class="typrow d-flex align-items-center" style="margin-top:7px"><svg class="typic" viewBox="0 0 27 24"><path d="M7 1v20M9 3h15M9 6h13M9 9h15M9 12h11M9 15h9M10 20h6" stroke="#404040"/></svg>
   <div class="tseg d-flex"><div class="tb sel d-flex align-items-center justify-content-center"><svg width="12" height="11" viewBox="0 0 12 11"><path d="M0 1h12M0 3.500h8M0 6h12M0 8.500h8M0 11h12" stroke="#707070"/></svg></div><div class="tb d-flex align-items-center justify-content-center"><svg width="12" height="11" viewBox="0 0 12 11"><path d="M0 1h12M2 3.500h8M0 6h12M2 8.500h8M0 11h12" stroke="#707070"/></svg></div><div class="tb d-flex align-items-center justify-content-center"><svg width="12" height="11" viewBox="0 0 12 11"><path d="M0 1h12M4 3.500h8M0 6h12M4 8.500h8M0 11h12" stroke="#707070"/></svg></div><div class="tb d-flex align-items-center justify-content-center"><svg width="12" height="11" viewBox="0 0 12 11"><path d="M0 1h12M0 3.500h12M0 6h12M0 8.500h12M0 11h12" stroke="#707070"/></svg></div></div>
   <div class="position-relative d-flex" style="margin-left:36px"><svg class="position-absolute" style="left:-19px;top:4px" width="13" height="15" viewBox="0 0 13 15"><text x="6.500" y="7" text-anchor="middle" font-size="8" fill="#4a4a4a">A</text><path d="M0 9h13" stroke="#4a4a4a"/><text x="6.500" y="15" text-anchor="middle" font-size="6" fill="#4a4a4a">A</text></svg>
   <div class="tb sel d-flex align-items-center justify-content-center"><svg width="10" height="10" viewBox="0 0 10 10"><path d="M1 1l8 8M9 1 1 9" stroke="#707070" stroke-width="1.200"/></svg></div><div class="tb d-flex align-items-center justify-content-center" style="font:700 14px 'Liberation Serif',serif;text-decoration:underline">T</div><div class="tb d-flex align-items-center justify-content-center" style="font:700 14px 'Liberation Serif',serif;text-decoration:line-through">T</div></div></div>
 <div class="typrow d-flex align-items-center" style="margin-top:8px"><svg class="typic" viewBox="0 0 27 24"><text x="6" y="15" font-size="11.500" letter-spacing="1" fill="#4a4a4a">AA</text></svg>
   <div class="tseg d-flex"><div class="tb sel d-flex align-items-center justify-content-center"><svg width="10" height="10" viewBox="0 0 10 10"><path d="M1 1l8 8M9 1 1 9" stroke="#707070" stroke-width="1.200"/></svg></div><div class="tb d-flex align-items-center justify-content-center">TT</div><div class="tb d-flex align-items-center justify-content-center">Tt</div><div class="tb d-flex align-items-center justify-content-center">tt</div></div>
   <div class="position-relative d-flex" style="margin-left:36px"><svg class="position-absolute" style="left:-19px;top:3px" width="15" height="17" viewBox="0 0 15 17"><text x="7.500" y="7" text-anchor="middle" font-size="7" fill="#4d4d4d" style="font-family:'Liberation Mono',monospace">DIR</text><path d="M2 10h13M12 8l2 2-2 2M0 14h12M2 12l-2 2 2 2" fill="none" stroke="#4d4d4d"/></svg>
   <div class="tb sel d-flex flex-column align-items-center justify-content-center" style="font:700 7px 'Liberation Mono',monospace;line-height:8px;color:#7a7a7a">LTR<svg width="13" height="6" viewBox="0 0 13 6"><path d="M0 1h13M0 3h9M0 5h13" stroke="#7a7a7a"/></svg></div><div class="tb d-flex flex-column align-items-center justify-content-center" style="font:700 7px 'Liberation Mono',monospace;line-height:8px">RTL<svg width="13" height="6" viewBox="0 0 13 6"><path d="M0 1h13M4 3h9M0 5h13" stroke="#6a6a6a"/></svg></div></div></div>
 <div class="rsep" style="margin-top:6px"></div>
 <div class="typrow d-flex align-items-center" style="margin-top:7px"><svg class="typic" viewBox="0 0 27 24"><path d="M8 7h6M8 10h6M8 13h6M8 16h6M8 19h6M8 21h6M16 7h6M16 10h6M16 13h6M16 16h6M16 19h6M16 21h6" stroke="#4a4a4a"/></svg><div class="tin dim d-flex align-items-center" style="width:64px">Auto</div><div class="tb d-flex align-items-center justify-content-center" style="margin-left:5px;border-right:0"><svg width="11" height="11" viewBox="0 0 16 16"><circle cx="8" cy="8" r="5" fill="none" stroke="#666" stroke-width="3.500"/><path d="M8 0v3M8 13v3M0 8h3M13 8h3M2.300 2.300l2.100 2.100M11.600 11.600l2.100 2.100M13.700 2.300l-2.100 2.100M4.400 11.600l-2.100 2.100" stroke="#666" stroke-width="2.500"/></svg></div></div>

 <div class="rhead d-flex align-items-center" style="margin-top:16px"><i class="caret"></i><span style="margin-left:2px">Background</span></div>
 <div class="d-flex align-items-center" style="margin-top:15px;padding-left:8px;color:#5a5a5a;font-size:11px">Image &amp; Gradient:<div class="bgtabs d-flex">
   <div class="bgtab d-flex align-items-center justify-content-center"><svg width="14" height="10" viewBox="0 0 14 10"><rect width="14" height="10" fill="#777"/><circle cx="3.500" cy="2.500" r="1.300" fill="#222"/><path d="M2 9l4-4 2 2 2-1 3 3z" fill="#222"/></svg></div>
   <div class="bgtab d-flex align-items-center justify-content-center"><svg width="14" height="10" viewBox="0 0 14 10"><defs><linearGradient id="gr"><stop offset="0" stop-color="#333"/><stop offset="1" stop-color="#777"/></linearGradient></defs><rect x=".5" y=".5" width="13" height="9" fill="url(#gr)" stroke="#5f5f5f"/></svg></div>
   <div class="bgtab d-flex align-items-center justify-content-center" style="border-right:0"><svg width="14" height="10" viewBox="0 0 14 10"><rect x=".5" y=".5" width="13" height="9" fill="#383838" stroke="#5f5f5f"/></svg></div></div></div>
 <div class="nonebox d-flex align-items-center justify-content-center">None</div>
 <div class="rsep" style="margin-top:9px"></div>
 <div class="typrow d-flex align-items-center" style="margin-top:12px"><div class="tin dim d-flex align-items-center p-0" style="width:202px"><span style="width:23px;height:22px;border-right:1px solid #1c1c1c"></span><span style="margin-left:7px">Transparent</span></div></div>
</aside>
</div>
</body></html>
